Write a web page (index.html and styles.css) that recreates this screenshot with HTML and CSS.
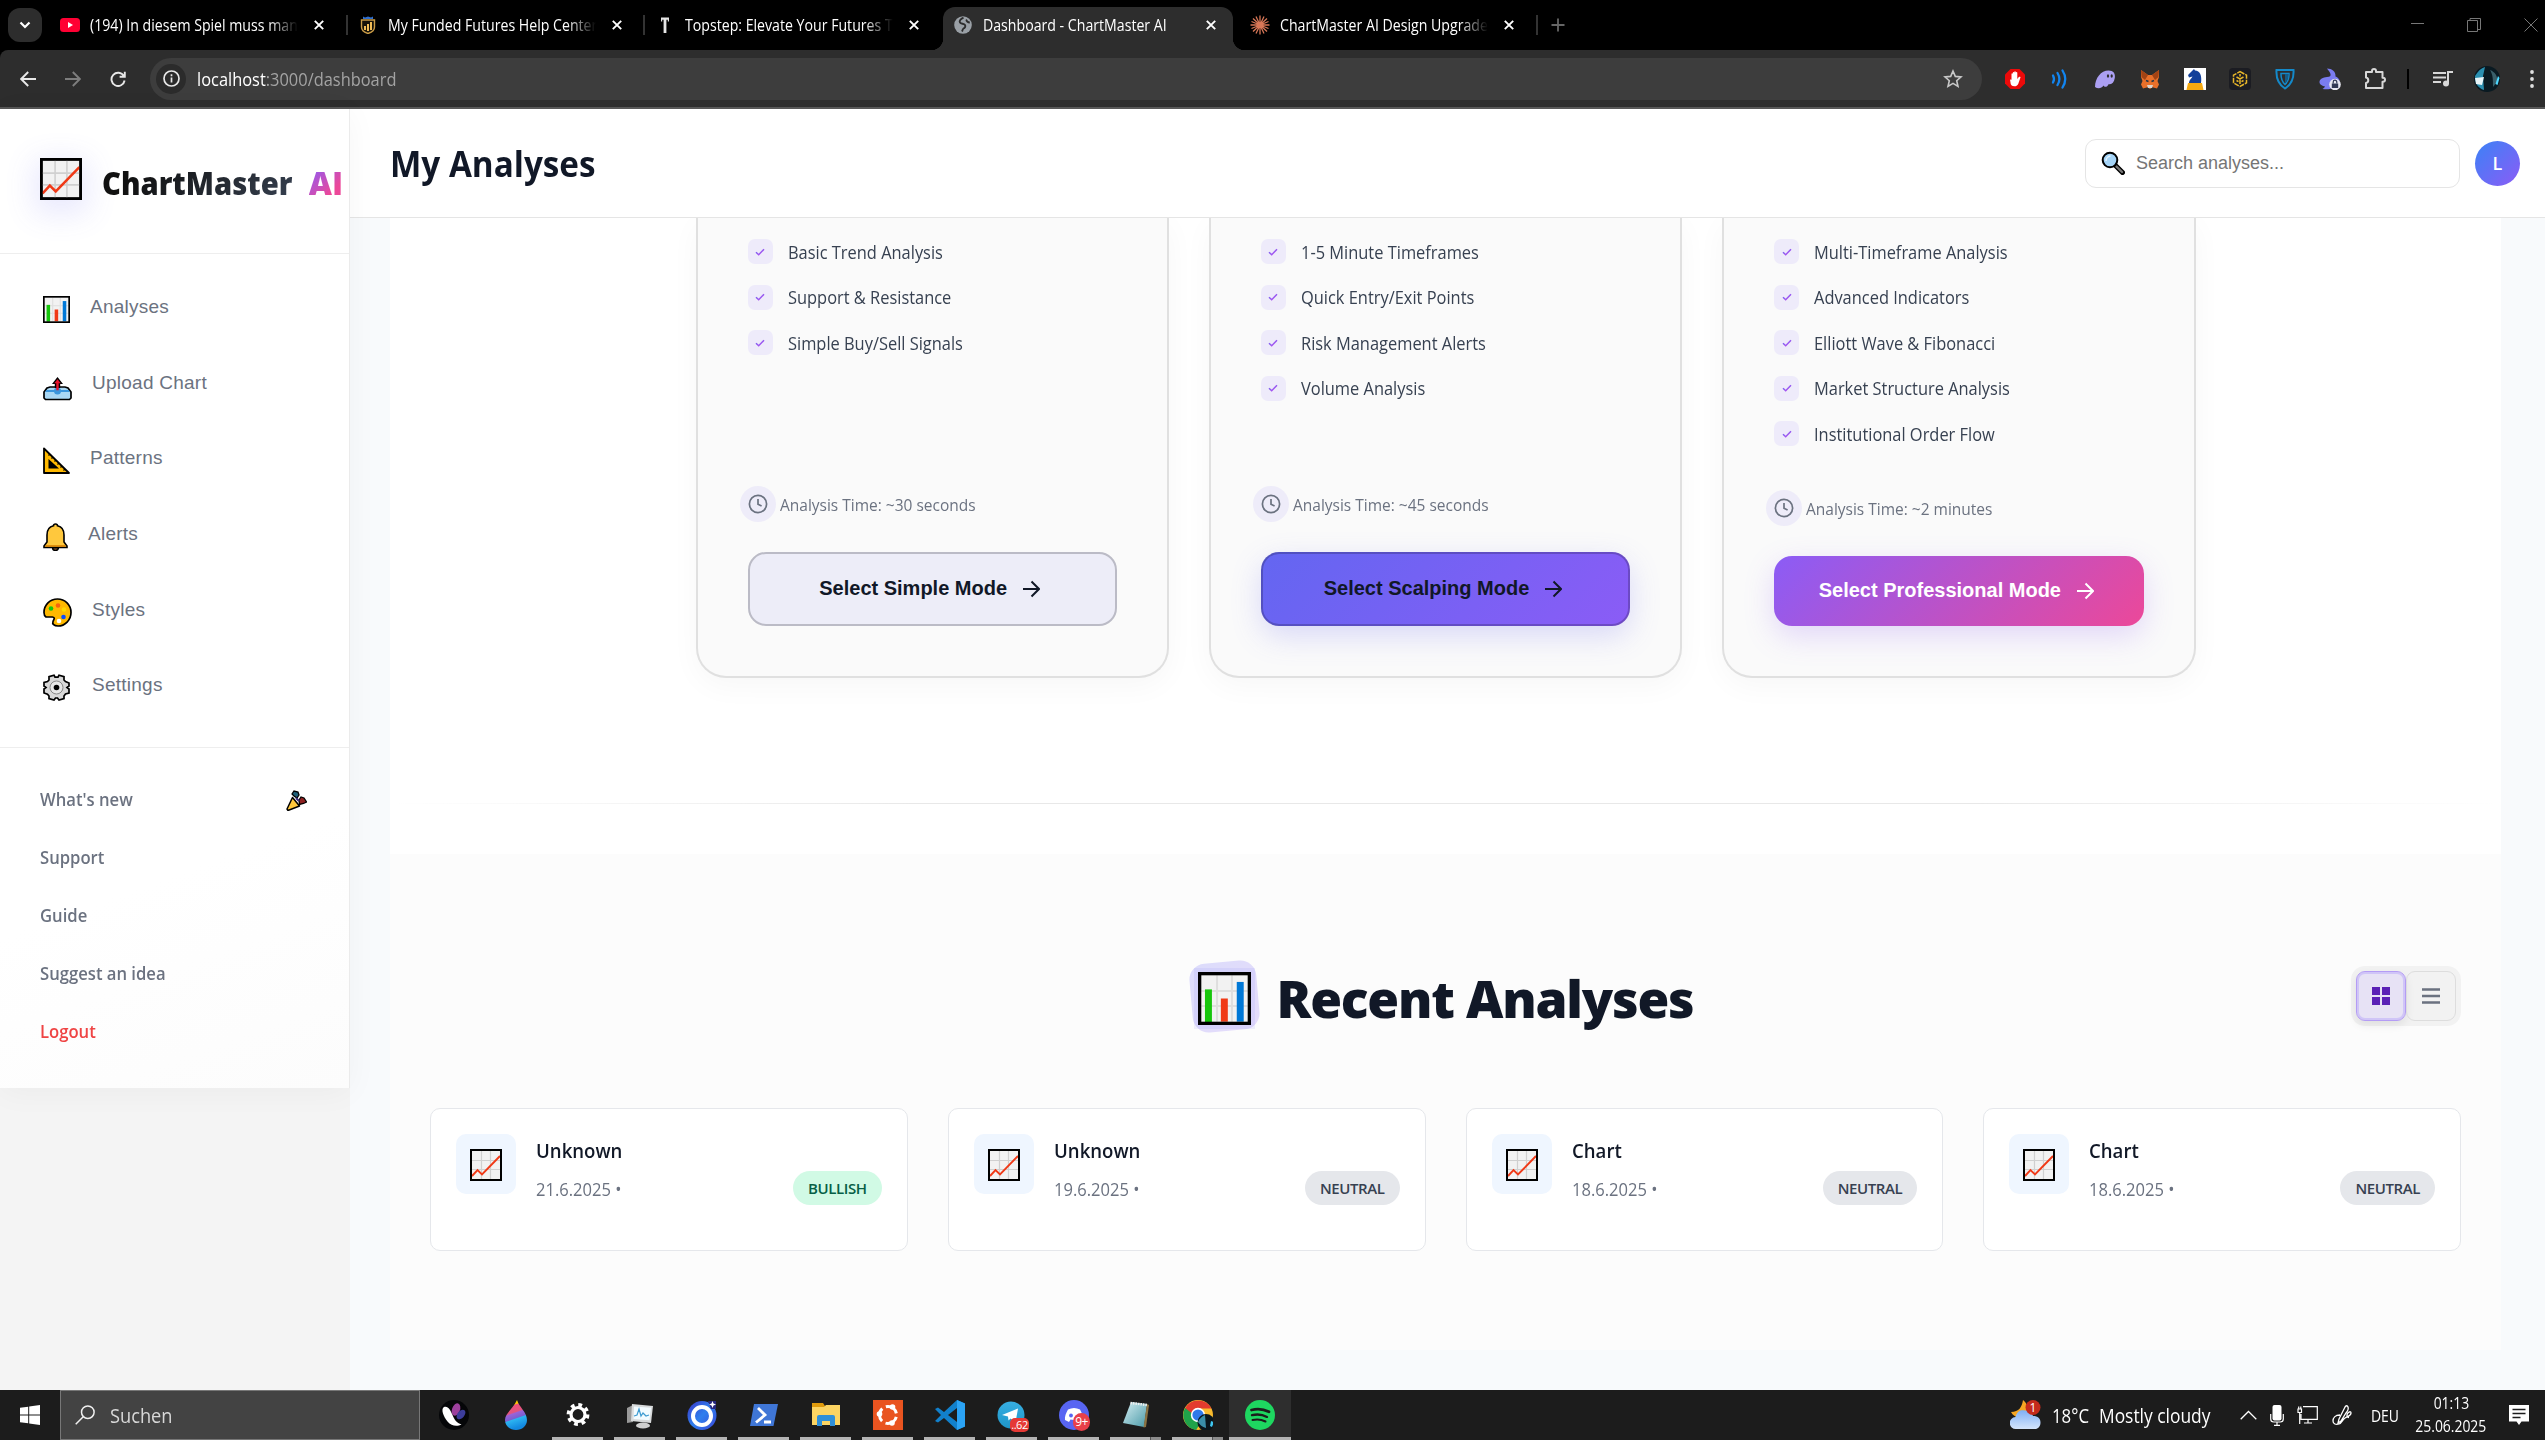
FILE: index.html
```html
<!DOCTYPE html>
<html lang="en">
<head>
<meta charset="utf-8">
<title>Dashboard - ChartMaster AI</title>
<link rel="stylesheet" href="styles.css">
</head>
<body>
<svg class="defs" width="0" height="0" aria-hidden="true">
  <defs>
    <linearGradient id="gCheck" x1="0" y1="0" x2="1" y2="1"><stop offset="0" stop-color="#6366f1"/><stop offset="1" stop-color="#c44df0"/></linearGradient>
    <linearGradient id="gDrop" x1="0" y1="0" x2=".25" y2="1"><stop offset="0" stop-color="#ffd500"/><stop offset=".24" stop-color="#ffc400"/><stop offset=".26" stop-color="#ee4f7e"/><stop offset=".48" stop-color="#e2557f"/><stop offset=".52" stop-color="#9a62d8"/><stop offset=".68" stop-color="#7a5fd0"/><stop offset=".71" stop-color="#2cb4f0"/><stop offset="1" stop-color="#1389e0"/></linearGradient>
    <linearGradient id="gCloud" x1="0" y1="0" x2="0" y2="1"><stop offset="0" stop-color="#7fb0f5"/><stop offset="1" stop-color="#d4e4fb"/></linearGradient>
    <linearGradient id="gTg" x1="0" y1="0" x2="0" y2="1"><stop offset="0" stop-color="#37aee2"/><stop offset="1" stop-color="#1e96c8"/></linearGradient>
    <linearGradient id="gO" x1="0" y1="0" x2="1" y2="1"><stop offset="0" stop-color="#3a35c8"/><stop offset=".5" stop-color="#2f7fee"/><stop offset="1" stop-color="#3b46d8"/></linearGradient>
    <linearGradient id="gNote" x1="0" y1="0" x2="1" y2="1"><stop offset="0" stop-color="#d5eef2"/><stop offset="1" stop-color="#4a9aa8"/></linearGradient>
  </defs>
  <symbol id="i-trend" viewBox="0 0 32 32"><rect x="1" y="1" width="30" height="30" fill="#f2f2f2" stroke="#000" stroke-width="2"/><path d="M11.500 2v28M20.500 2v28M2 11.500h28M2 20.500h28" stroke="#d0d0d0" stroke-width="1.200"/><path d="M2 27l5.500-6 4.500 4.500L30 7" fill="none" stroke="#f03a17" stroke-width="1.900"/><rect x="1" y="1" width="30" height="30" fill="none" stroke="#000" stroke-width="2"/></symbol>
  <symbol id="i-bars" viewBox="0 0 32 32"><rect x="1" y="1" width="30" height="30" fill="#f2f2f2"/><path d="M11.500 2v28M20.500 2v28M2 11.500h28M2 20.500h28" stroke="#dedede" stroke-width="1.200"/><rect x="4.200" y="10.500" width="4.200" height="20" fill="#16c60c"/><rect x="13.800" y="16" width="4.200" height="14" fill="#f03a17"/><rect x="23.400" y="6" width="4.200" height="24" fill="#0078d7"/><rect x="1" y="1" width="30" height="30" fill="none" stroke="#000" stroke-width="2"/></symbol>
  <symbol id="i-check" viewBox="0 0 10 8"><path d="M1 4.200l2.700 2.600L9 1.200" fill="none" stroke="url(#gCheck)" stroke-width="1.500"/></symbol>
  <symbol id="i-clock" viewBox="0 0 20 20"><circle cx="10" cy="10" r="8.600" fill="none" stroke="#6b7280" stroke-width="1.700"/><path d="M10 5v5.200l3.600 1.800" fill="none" stroke="#6b7280" stroke-width="1.700"/></symbol>
  <symbol id="i-arrow" viewBox="0 0 18 18"><path d="M1 9h16M9.500 1.500L17 9l-7.500 7.500" fill="none" stroke="currentColor" stroke-width="2"/></symbol>
  <symbol id="i-x" viewBox="0 0 10 10"><path d="M.8.8l8.400 8.400M9.200.8L.8 9.200" stroke="#fff" stroke-width="1.900"/></symbol>
</svg>

<div class="tabstrip">
  <div class="tab-menu"><svg width="12" height="8" viewBox="0 0 12 8"><path d="M1.500 1.500L6 6l4.500-4.500" fill="none" stroke="#fff" stroke-width="2.200"/></svg></div>
  <div class="tab">
    <span class="fav"><svg width="20" height="14" viewBox="0 0 20 14"><rect width="20" height="14" rx="3.500" fill="#ff0033"/><path d="M8 4v6l5-3z" fill="#fff"/></svg></span>
    <span class="tab-title fade">(194) In diesem Spiel muss man</span><svg class="tab-x"><use href="#i-x"/></svg>
  </div>
  <i class="tab-sep"></i>
  <div class="tab">
    <span class="fav"><svg width="16" height="18" viewBox="0 0 16 18"><path d="M3 3V.5l2 1 3-1 3 1 2-1V3z" fill="#2f6fd0"/><path d="M1.500 4h13v7c0 3.500-3 5.500-6.500 6.500C4.500 16.500 1.500 14.500 1.500 11z" fill="#17130a" stroke="#c99b46" stroke-width="1.400"/><path d="M5 14v-4M8 15V8M11 14V6" stroke="#f1bd57" stroke-width="2"/></svg></span>
    <span class="tab-title fade">My Funded Futures Help Center</span><svg class="tab-x"><use href="#i-x"/></svg>
  </div>
  <i class="tab-sep"></i>
  <div class="tab">
    <span class="fav"><svg width="10" height="16" viewBox="0 0 10 16"><path d="M1 .5h8v4H7.800V2.800H6.400V16H3.600V2.800H2.200v1.700H1z" fill="#e6e6e6"/></svg></span>
    <span class="tab-title fade">Topstep: Elevate Your Futures Tr</span><svg class="tab-x"><use href="#i-x"/></svg>
  </div>
  <div class="tab active">
    <span class="fav"><svg width="18" height="18" viewBox="0 0 18 18"><circle cx="9" cy="9" r="8.800" fill="#9aa0a6"/><path d="M9.500 1.600c-3 1.400-4.500 3.400-3.500 5s4 .8 5 2.400-.5 3-1.500 3.500-1 2-1.500 3M12.800 3.500c-1 1.500 1 3 3 3" fill="none" stroke="#2d2d2d" stroke-width="1.900"/></svg></span>
    <span class="tab-title">Dashboard - ChartMaster AI</span><svg class="tab-x"><use href="#i-x"/></svg>
  </div>
  <div class="tab">
    <span class="fav"><svg width="20" height="20" viewBox="0 0 20 20"><path d="M10 .5v19M.5 10h19M3 3.500l14 13M17 3.500l-14 13M6 1.500l8 17M14 1.500l-8 17M1.500 6.500l17 7M18.500 6.500l-17 7" stroke="#d97757" stroke-width="1.300"/></svg></span>
    <span class="tab-title fade">ChartMaster AI Design Upgrade</span><svg class="tab-x"><use href="#i-x"/></svg>
  </div>
  <i class="tab-sep"></i>
  <svg class="tab-plus" width="14" height="14" viewBox="0 0 14 14"><path d="M7 .5v13M.5 7h13" stroke="#666" stroke-width="1.800"/></svg>
  <div class="win-ctl">
    <svg width="13" height="13" viewBox="0 0 13 13"><path d="M0 5.500h13" stroke="#777"/></svg>
    <svg width="14" height="14" viewBox="0 0 14 14"><path d="M.5 2.500h10v11H.5zM3 2.500v-2h10.500v11h-3" fill="none" stroke="#777"/></svg>
    <svg width="14" height="14" viewBox="0 0 14 14"><path d="M.5.5l13 13M13.500.5l-13 13" stroke="#777"/></svg>
  </div>
</div>

<div class="toolbar">
  <svg class="nav-ic" viewBox="0 0 16 16"><path d="M16 8H1.500M8.200 1L1.200 8l7 7" fill="none" stroke="#e8e8e8" stroke-width="1.900"/></svg>
  <svg class="nav-ic" viewBox="0 0 16 16"><path d="M0 8h14.500M7.800 1l7 7-7 7" fill="none" stroke="#7d7d7d" stroke-width="1.900"/></svg>
  <svg class="nav-ic" viewBox="0 0 16 16"><path d="M13.800 5A6.600 6.600 0 1 0 14.600 9.500M14.800 .8v5H9.600" fill="none" stroke="#e8e8e8" stroke-width="1.900"/></svg>
  <div class="omnibox">
    <span class="site-info"><svg width="17" height="17" viewBox="0 0 17 17"><circle cx="8.500" cy="8.500" r="7.500" fill="none" stroke="#e8e8e8" stroke-width="1.700"/><path d="M8.500 7.500v5M8.500 4.300v2" stroke="#e8e8e8" stroke-width="1.700"/></svg></span>
    <span class="url">localhost<span class="dim">:3000/dashboard</span></span>
    <svg class="star" width="20" height="20" viewBox="0 0 20 20"><path d="M10 2l2.300 5.400 5.700.5-4.300 3.800 1.300 5.700-5-3-5 3 1.300-5.700L2 7.900l5.700-.5z" fill="none" stroke="#c8c8c8" stroke-width="1.600"/></svg>
  </div>
  <div class="exts">
    <svg viewBox="0 0 22 22"><path d="M6.500 1h9L21 6.500v9L15.500 21h-9L1 15.500v-9z" fill="#eb0a0a"/><path d="M6 11.500l1.500.2V6c0-1 1.300-1 1.300 0V4.800c0-1 1.500-1 1.500 0V4c0-1 1.500-1 1.500 0v.8c0-1 1.500-1 1.500 0V11l1.500-2c.9-.8 2-.1 1.600.8L14.200 16c-.8 1.700-2.200 2.300-3.700 2.300-2.800 0-4-1.700-4-3.800z" fill="#fff"/></svg>
    <svg viewBox="0 0 22 22"><g fill="none" stroke="#1285f0" stroke-width="2.300" stroke-linecap="round"><path d="M4 7.500q2 3.500 0 7M8.500 5q3.800 6 0 12M13.500 2.500q5.500 8.500 0 17"/></g></svg>
    <svg viewBox="0 0 22 22"><path d="M1 19C1 10 7 2.500 14.500 2.500c5 0 7 3 6.300 7.500-.8 5-3.800 7-6 6-1.800 3.500-4.300 3.500-5.300 1.500C7.500 20.500 4 21 1 19z" fill="#ab9ff2"/><ellipse cx="14" cy="8" rx="1.100" ry="1.800" fill="#2d2d2d"/><ellipse cx="17.700" cy="8" rx="1.100" ry="1.800" fill="#2d2d2d"/></svg>
    <svg viewBox="0 0 22 22"><path d="M2 2l7 5h4l7-5 0 7-1.500 4 1.500 3.500-2 4-4.500-1.200L11 21l-2.500-1.700L4 20.500l-2-4L3.500 13 2 9z" fill="#e8702a"/><path d="M2 2l7 5-3 5-3.500-3zM20 2l-7 5 3 5 3.500-3z" fill="#a34314"/><path d="M8 17h6l-1 3H9z" fill="#d9d4ce"/><path d="M7 12.500l2.500 1M15 12.500l-2.500 1" stroke="#233447" stroke-width="1.400"/></svg>
    <svg viewBox="0 0 22 22"><rect width="22" height="22" fill="#fff"/><path d="M5 15c0-3 3-5 3.500-6.500L5 9.500 4 7l5-5 1-1 1 1.500c5 0 7 5 6 12.500z" fill="#12409a"/><path d="M4 15h14l1.500 7h-17z" fill="#f5a912"/></svg>
    <svg viewBox="0 0 22 22"><rect width="22" height="22" rx="4" fill="#1b1c22"/><path d="M11 3.500l6.500 3.700v7.600L11 18.500l-6.500-3.700V7.200z" fill="none" stroke="#e8b62a" stroke-width="1.500" stroke-dasharray="5 1"/><path d="M7.500 9L11 11l3.500-2M11 11v5M7.500 12.500l2 1.200M14.500 12.500l-2 1.200M11 6v2.500" stroke="#e8b62a" stroke-width="1.500" fill="none"/></svg>
    <svg viewBox="0 0 22 22"><path d="M2.500 2h17c.5 8-2 14.500-8.500 18.500C4.500 16.500 2 10 2.500 2z" fill="none" stroke="#1489c9" stroke-width="2"/><path d="M7 5.500h8c.2 5-1.300 8.500-4 11-2.700-2.500-4.200-6-4-11z" fill="#2d2d2d" stroke="#1489c9" stroke-width="1.500"/><path d="M11 6h3.500c0 4-1.200 7-3.500 9z" fill="#155c86"/></svg>
    <svg viewBox="0 0 22 22"><path d="M8 .5c5 0 9 3 8.500 8C20 10 21 12 20.500 15L13 20c-3 2-7 1-9.500 1 1.500-1 2.500-2 2.500-2.500C3.500 18 .5 16.500.5 14 .5 11 4 9.500 8 9c3 0 4-1 3.500-3S9 2 8 .5z" fill="#7a7cf0"/><circle cx="16" cy="16.500" r="5.800" fill="#e9e9f2"/><rect x="12.800" y="15.500" width="6.400" height="4.500" fill="#333a55"/><path d="M14.200 15.500v-1.500a1.800 1.800 0 0 1 3.600 0v1.500" fill="none" stroke="#333a55" stroke-width="1.200"/></svg>
    <svg viewBox="0 0 22 22"><path d="M2 4h6V3a2 2 0 0 1 4 0v1h6.500v5.700h.5a2 2 0 0 1 0 4h-.5v6.300H2V15a2.800 2.800 0 0 0 0-5.500z" fill="none" stroke="#d8d8d8" stroke-width="2" stroke-linejoin="round"/></svg>
  </div>
  <i class="tb-sep"></i>
  <svg class="music" width="20" height="18" viewBox="0 0 20 18"><path d="M0 3h13M0 7.500h13M0 12h8M15 13.500V2h5" stroke="#d8d8d8" stroke-width="2" fill="none"/><circle cx="13" cy="13.500" r="3" fill="#d8d8d8"/></svg>
  <svg class="profile" width="26" height="26" viewBox="0 0 26 26"><circle cx="13" cy="13" r="13" fill="#0a1a22"/><path d="M1 10c3-5 6-8 10-9l-2 9 1 14C4 22 1 18 1 10z" fill="#2a8fb0"/><path d="M1 12l9-1-2 8-6-1z" fill="#e6f4f8"/><path d="M16 4c5 2 8 6 7 12l-4 5c0-8 0-12-3-17z" fill="#3a5f6a"/><path d="M24 10l1.500 2-2 7-2-1z" fill="#4fd8ff"/></svg>
  <svg class="dots" width="4" height="18" viewBox="0 0 4 18"><circle cx="2" cy="2" r="1.900" fill="#e0e0e0"/><circle cx="2" cy="9" r="1.900" fill="#e0e0e0"/><circle cx="2" cy="16" r="1.900" fill="#e0e0e0"/></svg>
</div>

<div class="page">
  <div class="side-col">
    <aside class="sidebar">
      <div class="brand">
        <svg class="brand-ic"><use href="#i-trend"/></svg>
        <span class="brand-name">ChartMaster</span><span class="brand-ai">AI</span>
      </div>
      <nav class="menu">
        <a><svg width="27" height="27"><use href="#i-bars"/></svg><span>Analyses</span></a>
        <a><svg class="up" width="29" height="24" viewBox="0 0 29 24"><path d="M4 11l3-1h15l3 1 3 4v6l-1.500 1.500h-24L1 21v-6z" fill="#a9d8f5" stroke="#000" stroke-width="1.700"/><path d="M3 13h23l.5 2H2.500z" fill="#3a96dd"/><circle cx="14.500" cy="14" r="3.500" fill="#3a96dd"/><path d="M14.500 0l5.500 7h-2.800v4h-5.400V7H9z" fill="#000"/><path d="M14.500 2.200l3.200 4h-2v7h-2.400v-7h-2z" fill="#e8122b"/></svg><span>Upload Chart</span></a>
        <a><svg width="27" height="27" viewBox="0 0 27 27"><path d="M1 1.500V26h25z" fill="#ffb900" stroke="#000" stroke-width="1.800" stroke-linejoin="round"/><path d="M5.500 12v9.500H16z" fill="#000"/><path d="M7 7l-1.500 1.500M10 10l-1.500 1.500M13 13l-1.500 1.500M16 16l-1.500 1.500M19 19l-1.500 1.500M22 22l-1.500 1.500" stroke="#000" stroke-width="1.200"/></svg><span>Patterns</span></a>
        <a><svg width="25" height="28" viewBox="0 0 25 28"><path d="M9.500 24.500a3 3 0 0 0 6 0z" fill="#8e562e" stroke="#000" stroke-width="1.500"/><path d="M12.500 1c1.500 0 2 .8 2 1.800 4.500 1 6.500 4.700 6.500 9.200v7l3 4v1.500H1V23l3-4v-7c0-4.500 2-8.200 6.500-9.200 0-1 .5-1.800 2-1.800z" fill="#ffc83d" stroke="#000" stroke-width="1.600"/><path d="M2.500 23h20" stroke="#d67d00" stroke-width="1.500"/></svg><span>Alerts</span></a>
        <a><svg width="29" height="29" viewBox="0 0 29 29"><path d="M14.500 1C22 1 28 7 28 14.500S22 28 15 28c-4 0-6-2-5-4.500s2.500-4-.5-4.500H3C1 17.500 1 16 1 14.500 1 7 7 1 14.500 1z" fill="#ffb900" stroke="#000" stroke-width="1.700"/><circle cx="8" cy="10.500" r="2.300" fill="#16c60c"/><circle cx="15" cy="7.500" r="2.300" fill="#f7630c"/><circle cx="21" cy="11.500" r="2.300" fill="#ffd800"/><circle cx="20.500" cy="19" r="2.300" fill="#0a4cff"/><circle cx="16" cy="23" r="2.300" fill="#fff"/></svg><span>Styles</span></a>
        <a><svg width="27" height="27" viewBox="0 0 27 27"><path d="M11 1.200l1 2h3l1-2 5 1.500V6l1.500 1.500L26 9v3l-2 1.500L26 15v4l-3.500 1-1.500 2v2.500L16 26l-1.500-2h-2L11 26l-5-1.500V22l-1.500-1.700L1 19v-4l2-1.500L1 12V8.500l3.500-1L6 6V2.700z" fill="#d8d8d8" stroke="#000" stroke-width="1.700"/><circle cx="13.500" cy="13.500" r="6.500" fill="#e6e6e6" stroke="#888"/><circle cx="13.500" cy="13.500" r="2.800" fill="#000"/></svg><span class="set">Settings</span></a>
      </nav>
      <div class="links">
        <a><span>What's new</span><svg width="21" height="21" viewBox="0 0 21 21"><path d="M6.500 7.500l7 8.500L2 20.500 1 19z" fill="#ffc83d" stroke="#000" stroke-width="1.500" stroke-linejoin="round"/><path d="M6 4l2-3 4 1 1 3-2 3-3-2z" fill="#1d5f78" stroke="#000" stroke-width="1.300"/><path d="M13 10l2-3 3 1 2.500 4-3 1.500-4 1z" fill="#8e2020" stroke="#000" stroke-width="1.300"/><path d="M10 8l3 3" stroke="#3b2a78" stroke-width="2"/></svg></a>
        <a><span>Support</span></a>
        <a><span>Guide</span></a>
        <a><span>Suggest an idea</span></a>
        <a class="logout"><span>Logout</span></a>
      </div>
    </aside>
  </div>

  <main class="main">
    <header class="topbar">
      <h1>My Analyses</h1>
      <div class="search"><svg width="24" height="24" viewBox="0 0 24 24"><path d="M14 14l7.500 7.500" stroke="#000" stroke-width="5" stroke-linecap="round"/><path d="M15.500 15.500l5.500 5.500" stroke="#767676" stroke-width="2.400" stroke-linecap="round"/><circle cx="9" cy="9" r="7.300" fill="#a5d4f7" stroke="#000" stroke-width="2"/><path d="M5 10a5 5 0 0 1 4.500-5" stroke="#e4f3fd" stroke-width="1.500" fill="none"/></svg><span>Search analyses...</span></div>
      <div class="avatar">L</div>
    </header>
    <div class="content">
      <section class="modes">
        <div class="mode-grid">
          <article class="mode">
            <ul>
              <li><b><svg><use href="#i-check"/></svg></b><span>Basic Trend Analysis</span></li>
              <li><b><svg><use href="#i-check"/></svg></b><span>Support &amp; Resistance</span></li>
              <li><b><svg><use href="#i-check"/></svg></b><span>Simple Buy/Sell Signals</span></li>
            </ul>
            <div class="time"><i><svg><use href="#i-clock"/></svg></i><span>Analysis Time: ~30 seconds</span></div>
            <div class="btn simple"><span>Select Simple Mode</span><svg><use href="#i-arrow"/></svg></div>
          </article>
          <article class="mode">
            <ul>
              <li><b><svg><use href="#i-check"/></svg></b><span>1-5 Minute Timeframes</span></li>
              <li><b><svg><use href="#i-check"/></svg></b><span>Quick Entry/Exit Points</span></li>
              <li><b><svg><use href="#i-check"/></svg></b><span>Risk Management Alerts</span></li>
              <li><b><svg><use href="#i-check"/></svg></b><span>Volume Analysis</span></li>
            </ul>
            <div class="time"><i><svg><use href="#i-clock"/></svg></i><span>Analysis Time: ~45 seconds</span></div>
            <div class="btn scalping"><span>Select Scalping Mode</span><svg><use href="#i-arrow"/></svg></div>
          </article>
          <article class="mode">
            <ul>
              <li><b><svg><use href="#i-check"/></svg></b><span>Multi-Timeframe Analysis</span></li>
              <li><b><svg><use href="#i-check"/></svg></b><span>Advanced Indicators</span></li>
              <li><b><svg><use href="#i-check"/></svg></b><span>Elliott Wave &amp; Fibonacci</span></li>
              <li><b><svg><use href="#i-check"/></svg></b><span>Market Structure Analysis</span></li>
              <li><b><svg><use href="#i-check"/></svg></b><span>Institutional Order Flow</span></li>
            </ul>
            <div class="time"><i><svg><use href="#i-clock"/></svg></i><span>Analysis Time: ~2 minutes</span></div>
            <div class="btn pro"><span>Select Professional Mode</span><svg><use href="#i-arrow"/></svg></div>
          </article>
        </div>
        <hr>
      </section>
      <section class="recent">
        <div class="recent-head">
          <div class="recent-title"><span class="title-ic"><svg><use href="#i-bars"/></svg></span><h2>Recent Analyses</h2></div>
          <div class="toggle">
            <span class="on"><svg width="18" height="18" viewBox="0 0 18 18"><path d="M0 0h8v8H0zM10 0h8v8h-8zM0 10h8v8H0zM10 10h8v8h-8z" fill="#5b21b6"/></svg></span>
            <span><svg width="18" height="16" viewBox="0 0 18 16"><path d="M0 1.500h18M0 8h18M0 14.500h18" stroke="#6b7280" stroke-width="2.300"/></svg></span>
          </div>
        </div>
        <div class="rows">
          <article class="item"><span class="thumb"><svg><use href="#i-trend"/></svg></span><div class="meta"><h3>Unknown</h3><p>21.6.2025 •</p></div><em class="bull">BULLISH</em></article>
          <article class="item"><span class="thumb"><svg><use href="#i-trend"/></svg></span><div class="meta"><h3>Unknown</h3><p>19.6.2025 •</p></div><em>NEUTRAL</em></article>
          <article class="item"><span class="thumb"><svg><use href="#i-trend"/></svg></span><div class="meta"><h3>Chart</h3><p>18.6.2025 •</p></div><em>NEUTRAL</em></article>
          <article class="item"><span class="thumb"><svg><use href="#i-trend"/></svg></span><div class="meta"><h3>Chart</h3><p>18.6.2025 •</p></div><em>NEUTRAL</em></article>
        </div>
      </section>
    </div>
  </main>
</div>

<footer class="taskbar">
  <div class="start"><svg width="20" height="20" viewBox="0 0 20 20"><path d="M0 2.800L8.200 1.700v7.800H0zM9.200 1.500L20 0v9.500H9.200zM0 10.500h8.200v7.800L0 17.200zM9.200 10.500H20V20L9.200 18.500z" fill="#fff"/></svg></div>
  <div class="task-search"><svg width="20" height="20" viewBox="0 0 20 20"><circle cx="12.800" cy="7.200" r="6.300" fill="none" stroke="#f0f0f0" stroke-width="1.500"/><path d="M8.200 11.800L.7 19.300" stroke="#f0f0f0" stroke-width="1.500"/></svg><span>Suchen</span></div>
  <div class="apps">
    <span><svg viewBox="0 0 30 30"><circle cx="15" cy="15" r="15" fill="#050608"/><ellipse cx="17" cy="9.500" rx="4" ry="6.500" transform="rotate(20 17 9.500)" fill="#9c3f9c"/><ellipse cx="22" cy="14.500" rx="3.500" ry="5.500" transform="rotate(40 22 14.500)" fill="#3c3d9c"/><path d="M5 7c4-1.500 6.500 3 8.500 8s4 7.500 9 9.500c-4 2-10 2-14-3S1.500 9 5 7z" fill="#fff"/></svg></span>
    <span><svg viewBox="0 0 30 30"><path d="M16 0c2 7 10 12 10 20 0 6-5 10-11 10S4 26 4 20C4 13 12 9 16 0z" fill="url(#gDrop)"/></svg></span>
    <span class="run"><svg viewBox="0 0 30 30"><circle cx="15" cy="14.500" r="7" fill="none" stroke="#fff" stroke-width="3.200"/><circle cx="15" cy="14.500" r="9.600" fill="none" stroke="#fff" stroke-width="3.600" stroke-dasharray="3.770 3.770"/></svg></span>
    <span class="run"><svg viewBox="0 0 30 30"><path d="M2 8l6-3v17l-6 1z" fill="#9a9a9a"/><path d="M7 4l21 2-2 17-20-2z" fill="#d8dadb"/><path d="M9 6.500l17 1.300-1.500 12.500-16-1.300z" fill="#f2fbff"/><path d="M9 16l3-1 2-6 2 7 2-3 3 3 3-1" fill="none" stroke="#3d9bd1" stroke-width="1.200"/><ellipse cx="18" cy="25.500" rx="7" ry="3" fill="#cfcfcf"/></svg></span>
    <span class="run"><svg viewBox="0 0 30 30"><circle cx="15" cy="15.500" r="14.500" fill="url(#gO)"/><circle cx="15" cy="16" r="9" fill="none" stroke="#fff" stroke-width="4"/><path d="M21 1h8v8h-5z" fill="#27277d"/><path d="M25.500 1l1 2.500 2.500 1-2.500 1-1 2.500-1-2.500-2.500-1 2.500-1z" fill="#fff"/></svg></span>
    <span class="run"><svg viewBox="0 0 30 30"><path d="M5 4h24l-4.500 22H1z" fill="#3f76d6"/><path d="M9 8l7 7-9 7.500M15 22h7" fill="none" stroke="#fff" stroke-width="2.800"/></svg></span>
    <span class="run"><svg viewBox="0 0 30 30"><path d="M1 3h11l2 3v3H1z" fill="#e09b0c"/><path d="M1 7h12l2-2h14v20H1z" fill="#fcd462"/><path d="M6 26V17q0-2 2-2h14q2 0 2 2v9h-5v-5h-8v5z" fill="#2f8fd8"/></svg></span>
    <span class="run"><svg viewBox="0 0 30 30"><rect width="30" height="30" fill="#e95420"/><circle cx="15" cy="15" r="8.500" fill="none" stroke="#fff" stroke-width="3" stroke-dasharray="13.800 4" stroke-dashoffset="-2"/><circle cx="6.500" cy="14" r="2.800" fill="#fff"/><circle cx="19.500" cy="7" r="2.800" fill="#fff"/><circle cx="19" cy="23" r="2.800" fill="#fff"/></svg></span>
    <span class="run"><svg viewBox="0 0 30 30"><path d="M22 0l8 3.500v23L22 30 9 18l-6 4.500L0 21l6-6-6-6 3-1.500L9 12z" fill="#1180cc"/><path d="M22 8v14l-9-7z" fill="#1c1c1c"/><path d="M22 0l8 3.500v23L22 30z" fill="#2ba3f5"/></svg></span>
    <span class="run"><svg viewBox="0 0 30 30"><circle cx="14" cy="15" r="13.500" fill="url(#gTg)"/><path d="M5 15L21 8.500l-2.500 14-5-4-2 2-.5-4z" fill="#fff"/></svg><u>..62</u></span>
    <span class="run"><svg viewBox="0 0 30 30"><circle cx="15" cy="15" r="15" fill="#5865f2"/><path d="M9 9.500c4-2 8-2 12 0 2 3.500 3.500 7 3 10.500l-4 2-1.500-2.500c-2.500.6-4.500.6-7 0L10 22l-4-2c-.5-3.500 1-7 3-10.500z" fill="#fff"/><circle cx="12" cy="15.500" r="1.900" fill="#5865f2"/></svg><u class="round">9+</u></span>
    <span class="run split"><svg viewBox="0 0 30 30"><path d="M10 2l16 2-3 23L2 23z" fill="url(#gNote)"/><path d="M26 4l2 1-3 22-2.500.5z" fill="#8b7343"/><path d="M9.500 3l17 2" stroke="#eee" stroke-width="2.500" stroke-dasharray="1.500 1"/></svg></span>
    <span class="run split"><svg viewBox="0 0 30 30"><circle cx="15" cy="15" r="15" fill="#f9bb2d"/><path d="M2 8.500A15 15 0 0 1 28.500 8.500H15L9 16z" fill="#e33b2e"/><path d="M2 8A15 15 0 0 0 13 29.900L19 21z" fill="#1fa34a"/><circle cx="15" cy="15" r="7.200" fill="#fff"/><circle cx="15" cy="15" r="5.600" fill="#3079ea"/><circle cx="23" cy="22.500" r="8.500" fill="#0a161c"/><path d="M15 22c2-4 4-6 7-7l1 13c-4-1-6-3-8-6z" fill="#3a8ea8"/><path d="M28 21l3 1-2 5-2-1z" fill="#3fc6f0"/></svg></span>
    <span class="run current"><svg viewBox="0 0 30 30"><circle cx="15" cy="15" r="15" fill="#1ed760"/><g fill="none" stroke="#1c1c1c" stroke-linecap="round"><path d="M6.500 10q9-2.500 17.500 1.800" stroke-width="2.800"/><path d="M7 15.200q8-2 15 1.700" stroke-width="2.300"/><path d="M7.500 20q7-1.600 13 1.500" stroke-width="2"/></g></svg></span>
  </div>
  <div class="tray">
    <svg class="weather" width="32" height="30" viewBox="0 0 32 30"><path d="M13 0c-1 7-4 12-12 12 2 4 6 6 10 5l6-5c1-5 0-9-4-12z" fill="#f5a623"/><path d="M6 29a6 6 0 0 1-.5-12C7 11 11 9.500 15 10.500c4 0 7 2 8 5.500 5 0 7.500 2.500 7.500 6.500S28 29 25 29z" fill="url(#gCloud)"/><circle cx="23" cy="7.500" r="7.500" fill="#c42b1c"/></svg><u class="w-badge">1</u>
    <span class="w-temp">18°C</span><span class="w-text">Mostly cloudy</span>
    <svg class="t-chev" width="17" height="10" viewBox="0 0 17 10"><path d="M.7 9.300L8.500 1.500l7.800 7.800" fill="none" stroke="#fff" stroke-width="1.300"/></svg>
    <svg class="t-mic" width="14" height="21" viewBox="0 0 14 21"><rect x="2.500" y="0" width="9" height="15.500" rx="2" fill="#fff"/><path d="M.7 9v5q0 3 3 3h6.600q3 0 3-3V9M7 17v3.500M4 20.300h6" fill="none" stroke="#fff" stroke-width="1.200"/></svg>
    <svg class="t-net" width="21" height="18" viewBox="0 0 21 18"><path d="M6 .7h14.300v12.600H4V8M11 13.300v3.500M7 17h8M1 3v3.500h3.500V3zM1.700 .5v2M3.800 .5v2M2.700 6.500V18" fill="none" stroke="#fff" stroke-width="1.200"/></svg>
    <svg class="t-pen" width="21" height="21" viewBox="0 0 21 21"><path d="M7 14L13 2q2-2.500 3 0t-2 6L9 16l-3 2zM8 10c-5 0-7 3-7 6s3 4 6 3 3-4 6-6 6-2 6-5-4 0-4 2 0 2.500 2 2.500" fill="none" stroke="#fff" stroke-width="1.300"/></svg>
    <span class="t-lang">DEU</span>
    <div class="t-clock"><span>01:13</span><span>25.06.2025</span></div>
    <svg class="t-note" width="20" height="20" viewBox="0 0 20 20"><path d="M0 0h20v16.500h-7.500L10 20l-2.500-3.500H0z" fill="#fff"/><path d="M3.500 4.500h13M3.500 8.500h13M3.500 12.500h8" stroke="#1c1c1c" stroke-width="1.300"/></svg>
  </div>
</footer>
</body>
</html>
```
FILE: styles.css
```css
* { box-sizing: border-box; }
body { margin: 0; width: 2545px; height: 1440px; overflow: hidden; display: flex; flex-direction: column; font-family: "Open Sans", "Noto Sans", sans-serif; color: #111827; background: #f4f4f4; }
svg { display: block; flex: none; }
.defs { position: absolute; }
span { white-space: nowrap; }
h1, h2, h3, p, ul { margin: 0; padding: 0; }

/* Narrowed text: Open Sans brought to the proportions of the interface face */
.tab-title, .url, .mode li span, .time span, .links span, .item h3, .item p, .task-search span, .w-temp, .w-text, .t-lang, .topbar h1, .brand-name { transform: scaleX(.912); transform-origin: 0 50%; }

/* Browser tabs */
.tabstrip { height: 50px; background: #000; display: flex; align-items: center; padding-left: 8px; flex: none; }
.tab-menu { width: 34px; height: 34px; border-radius: 12px; background: #2d2d2d; display: flex; align-items: center; justify-content: center; margin-right: 8px; }
.tab { width: 296.700px; height: 43px; margin-top: 7px; padding: 0 0 7px 10px; display: flex; align-items: center; flex: none; }
.fav { width: 20px; margin-right: 10px; display: flex; justify-content: center; }
.tab-title { width: 228px; margin-right: -20px; flex: none; overflow: hidden; color: #fff; font-size: 15.500px; line-height: 22px; }
.fade { -webkit-mask-image: linear-gradient(90deg, #000 86%, transparent); mask-image: linear-gradient(90deg, #000 86%, transparent); }
.tab-x { width: 10px; height: 10px; margin-left: 16px; }
.tab-sep { width: 2px; height: 20px; margin: 0 0 0 -1px; background: #333; }
.tab.active { width: 290px; background: #2d2d2d; border-radius: 12px 12px 0 0; position: relative; margin: 7px 7px 0 1px; }
.tab.active .tab-x { margin-left: 15px; }
.tab.active::before, .tab.active::after { content: ""; position: absolute; bottom: 0; width: 12px; height: 12px; }
.tab.active::before { left: -12px; background: radial-gradient(circle at 0 0, transparent 12px, #2d2d2d 12.500px); }
.tab.active::after { right: -12px; background: radial-gradient(circle at 100% 0, transparent 12px, #2d2d2d 12.500px); }
.tab-plus { margin-left: 13px; }
.win-ctl { margin-left: auto; display: flex; gap: 43px; padding-right: 7px; }

.toolbar { height: 59px; background: #2d2d2d; border-bottom: 2px solid #575757; display: flex; align-items: center; flex: none; padding-left: 20px; border-top-left-radius: 8px; box-shadow: -8px -8px 0 #000; }
.nav-ic { width: 16px; height: 16px; margin-right: 29px; }
.nav-ic + .nav-ic + .nav-ic { margin-right: 24px; }
.omnibox { width: 1832px; height: 42px; border-radius: 21px; background: #3d3d3d; display: flex; align-items: center; padding: 0 19px 0 6px; }
.site-info { width: 30px; height: 30px; border-radius: 50%; background: #2b2b2b; display: flex; align-items: center; justify-content: center; }
.url { margin: 1px 0 0 11px; font-size: 18px; color: #fff; }
.dim { color: #a3a3a3; }
.star { margin-left: auto; }
.exts { display: flex; gap: 23px; margin-left: 22px; }
.exts svg { width: 22px; height: 22px; }
.tb-sep { width: 2px; height: 20px; background: #000; margin-left: 21px; }
.music { margin-left: 24px; }
.profile { margin-left: 21px; }
.dots { margin-left: 30px; }

/* Application */
.page { height: 1281px; display: grid; grid-template-columns: 350px 1fr; flex: none; }
.side-col { background: #f4f4f4; position: relative; z-index: 2; }
.sidebar { width: 350px; height: 979px; background: linear-gradient(160deg, #fff 75%, #fcfcfc); border-right: 1px solid #ebebeb; box-shadow: 0 4px 30px rgba(0, 0, 0, .04); }
.brand { height: 145px; border-bottom: 1px solid #eee; display: flex; align-items: center; padding: 0 0 4px 40px; overflow: hidden; }
.brand-ic { width: 42px; height: 42px; box-shadow: 0 8px 30px 6px rgba(99, 102, 241, .14); }
.brand-name { margin: 7px -16px 0 20px; font-size: 32px; font-weight: 800; background: linear-gradient(135deg, #111 20%, #374151); -webkit-background-clip: text; background-clip: text; color: transparent; }
.brand-ai { margin: 7px 0 0 14px; font-size: 32px; font-weight: 800; background: linear-gradient(135deg, #8b5cf6 10%, #ec4899 70%); -webkit-background-clip: text; background-clip: text; color: transparent; }
.menu { height: 494px; border-bottom: 1px solid #eee; padding: 18px 0 0 43px; font-family: "Liberation Sans", Arial, sans-serif; }
.menu a { height: 75.600px; display: flex; align-items: center; color: #6b7280; font-size: 19px; letter-spacing: .25px; }
.menu a span { margin: -5px 0 0 20px; }
.menu a .set { margin-left: 22px; }
.menu a .up { margin-top: 7px; }
.links { padding: 23px 0 0 40px; }
.links a { height: 58px; display: flex; align-items: center; justify-content: space-between; width: 267px; color: #6b7280; font-size: 18px; font-weight: 600; }
.links span { transform: scaleX(.925); margin-top: -2px; }
.links a.logout { color: #ef4444; }

.main { background: #f8fafc; display: flex; flex-direction: column; min-width: 0; }
.topbar { height: 109px; background: #fff; border-bottom: 1px solid #e5e5e5; display: flex; align-items: center; padding: 0 25px 0 40px; flex: none; }
.topbar h1 { font-size: 35px; line-height: 44px; font-weight: 700; margin-right: auto; margin-top: 1px; transform: scaleX(.95); }
.search { width: 375px; height: 49px; border: 1px solid #e5e5e5; border-radius: 11px; display: flex; align-items: center; padding-left: 15px; gap: 11px; font: 18px "Liberation Sans", Arial, sans-serif; color: #757575; }
.avatar { width: 45px; height: 45px; margin-left: 15px; border-radius: 50%; background: linear-gradient(135deg, #3b82f6, #8b5cf6); color: #fff; font-weight: 600; font-size: 18px; display: flex; align-items: center; justify-content: center; }

.content { margin: 0 44px 0 40px; }
.modes { height: 636px; background: #fff; overflow: hidden; }
.mode-grid { width: 1500px; margin: 0 auto; display: grid; grid-template-columns: repeat(3, 1fr); gap: 40px; }
.mode { height: 460px; background: #fafafa; border: 2px solid #e0e0e0; border-top: 0; border-radius: 0 0 30px 30px; padding: 21px 50px 50px; display: flex; flex-direction: column; box-shadow: 0 8px 30px rgba(0, 0, 0, .035); }
.mode ul { list-style: none; display: grid; gap: 20.500px; margin-bottom: auto; }
.mode li { height: 25px; display: flex; align-items: center; gap: 15px; color: #374151; font-size: 18px; }
.mode li b { width: 25px; height: 25px; border-radius: 7px; background: #eeebfa; display: flex; align-items: center; justify-content: center; }
.mode li svg { width: 10px; height: 8px; }
.time { display: flex; align-items: center; gap: 4px; margin: 0 0 30px -8px; color: #6b7280; font-size: 16px; }
.time span { transform: scaleX(.968); margin-top: 2px; }
.time i { width: 36px; height: 36px; border-radius: 50%; background: #eeecf9; display: flex; align-items: center; justify-content: center; }
.time svg { width: 20px; height: 20px; }
.btn { height: 74px; border-radius: 18px; display: flex; align-items: center; justify-content: center; gap: 15px; padding-right: 5px; font: bold 20px "Liberation Sans", Arial, sans-serif; color: #111827; }
.btn span { margin-top: -2px; }
.btn svg { width: 18px; height: 18px; margin-top: -1px; }
.simple { background: #ededf8; border: 2px solid #bbbbc6; }
.scalping { background: linear-gradient(135deg, #6366f1, #8b5cf6) border-box; border: 2px solid rgba(0, 0, 0, .2); box-shadow: 0 10px 30px rgba(99, 102, 241, .22); }
.pro { height: 70px; color: #fff; background: linear-gradient(135deg, #8b5cf6, #ec4899); box-shadow: 0 10px 30px rgba(139, 92, 246, .22); }
.modes hr { border: 0; height: 1px; margin: 125px 0 0; background: linear-gradient(90deg, transparent, #e8e8e8 25%, #e8e8e8 75%, transparent); }

.recent { height: 496px; background: #fcfcfc; padding: 105px 40px 0; }
.recent-head { display: grid; grid-template-columns: 1fr auto 1fr; align-items: center; height: 74px; }
.recent-title { grid-column: 2; display: flex; align-items: center; gap: 19px; margin-right: 7px; }
.title-ic { width: 67px; height: 69px; display: flex; align-items: center; justify-content: center; position: relative; }
.title-ic::before { content: ""; position: absolute; inset: 0; border-radius: 16px; background: linear-gradient(135deg, #dcdcfb, #e5dcfb); transform: rotate(-5deg); }
.title-ic svg { width: 53px; height: 53px; position: relative; box-shadow: 0 0 0 4px rgba(99, 102, 241, .09); margin-top: 4px; }
.recent h2 { font-size: 51.500px; line-height: 70px; font-weight: 800; letter-spacing: -1.200px; margin-top: 4px; }
.toggle { justify-self: end; width: 110px; height: 60px; border-radius: 14px; background: #f2f2f2; padding: 5px; display: flex; }
.toggle span { width: 50px; height: 50px; border: 1px solid #ddd; border-radius: 9px; display: flex; align-items: center; justify-content: center; }
.toggle .on { border-color: #b49cf5; background: #e7e2f5; box-shadow: inset 0 0 0 2px #d0c5f7, 0 4px 10px rgba(0, 0, 0, .08); }
.rows { margin-top: 75px; display: grid; grid-template-columns: repeat(4, 1fr); gap: 40px; }
.item { height: 143px; background: #fff; border: 1px solid #e5e7eb; border-radius: 10px; padding: 25px; display: flex; }
.thumb { width: 60px; height: 60px; border-radius: 10px; background: #eff6ff; display: flex; align-items: center; justify-content: center; flex: none; }
.thumb svg { width: 32px; height: 32px; margin-top: 2px; }
.meta { margin-left: 20px; }
.item h3 { font-size: 20px; line-height: 26px; font-weight: 600; margin-top: 4px; transform: scaleX(.93); }
.item p { font-size: 18px; line-height: 24px; color: #6b7280; margin-top: 13px; transform: scaleX(.92); }
.item em { margin: 37px 0 0 auto; height: 34px; border-radius: 17px; padding: 0 15px; background: #e5e7eb; color: #374151; font-style: normal; font-size: 15px; line-height: 34px; font-weight: 600; letter-spacing: -.4px; }
.item .bull { background: #d1fae5; color: #065f46; }

/* Taskbar */
.taskbar { height: 50px; background: #1c1c1c; display: flex; flex: none; color: #fff; }
.start { width: 60px; display: flex; align-items: center; justify-content: center; }
.task-search { width: 360px; background: #434343; border: 1px solid #777; display: flex; align-items: center; gap: 15px; padding-left: 14px; font-size: 20px; color: #d8d8d8; }
.apps { display: flex; margin-left: 3px; }
.apps span { width: 62px; height: 50px; padding: 10px 16px; position: relative; }
.apps svg { width: 30px; height: 30px; }
.run::after { content: ""; position: absolute; left: 5px; right: 6px; bottom: 0; height: 3px; background: #b4b4b4; }
.split::after { background: linear-gradient(90deg, #b4b4b4 40px, #555 40px, #555 41px, #8c8c8c 41px); }
.current { background: #2e2e2e; }
.current::after { left: 0; right: 0; }
.apps u { position: absolute; left: 29px; top: 28px; width: 19px; height: 14px; border-radius: 5px; background: #e53935; color: #fff; font-size: 11px; line-height: 14px; text-align: center; text-decoration: none; letter-spacing: -.5px; }
.apps .round { width: 17px; height: 18px; left: 30px; top: 23px; border-radius: 9px; background: #e8404a; font-size: 12px; line-height: 18px; }
.tray { margin-left: auto; display: flex; align-items: center; position: relative; padding-right: 16px; }
.w-badge { position: absolute; left: 15px; top: 10px; width: 16px; height: 16px; font-size: 12px; line-height: 16px; text-align: center; text-decoration: none; }
.w-temp { margin-left: 10px; font-size: 20px; width: 36px; transform: scaleX(.84); }
.w-text { margin-left: 11px; font-size: 20px; width: 111px; transform: scaleX(.87); }
.t-chev { margin-left: 30px; }
.t-mic { margin-left: 13px; }
.t-net { margin-left: 13px; }
.t-pen { margin-left: 14px; }
.t-lang { margin-left: 18px; font-size: 17px; width: 28px; transform: scaleX(.82); }
.t-clock { width: 72px; margin: 0 22px 0 16px; display: flex; flex-direction: column; align-items: center; font-size: 16px; line-height: 23px; }
.t-clock span { transform: scaleX(.87); }
```
